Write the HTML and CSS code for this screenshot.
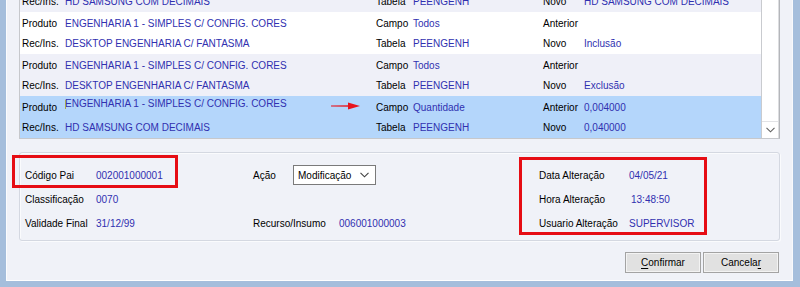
FILE: index.html
```html
<!DOCTYPE html>
<html lang="pt">
<head>
<meta charset="utf-8">
<title>Alteração de Estrutura</title>
<link rel="stylesheet" href="styles.css">
</head>
<body>
<div class="window">
  <div class="list">
    <div class="rows">
      <div class="rows-inner">
        <div class="row row-alt">
          <div class="line">
            <span class="lbl">Produto</span><span class="val">ENGENHARIA 1 - SIMPLES C/ CONFIG. CORES</span>
            <span class="lbl">Campo</span><span class="val">Recurso/Insumo</span>
            <span class="lbl">Anterior</span><span class="val"></span>
          </div>
          <div class="line">
            <span class="lbl">Rec/Ins.</span><span class="val">HD SAMSUNG COM DECIMAIS</span>
            <span class="lbl">Tabela</span><span class="val">PEENGENH</span>
            <span class="lbl">Novo</span><span class="val">HD SAMSUNG COM DECIMAIS</span>
          </div>
        </div>
        <div class="row">
          <div class="line">
            <span class="lbl">Produto</span><span class="val">ENGENHARIA 1 - SIMPLES C/ CONFIG. CORES</span>
            <span class="lbl">Campo</span><span class="val">Todos</span>
            <span class="lbl">Anterior</span><span class="val"></span>
          </div>
          <div class="line">
            <span class="lbl">Rec/Ins.</span><span class="val">DESKTOP ENGENHARIA C/ FANTASMA</span>
            <span class="lbl">Tabela</span><span class="val">PEENGENH</span>
            <span class="lbl">Novo</span><span class="val">Inclusão</span>
          </div>
        </div>
        <div class="row row-alt">
          <div class="line">
            <span class="lbl">Produto</span><span class="val">ENGENHARIA 1 - SIMPLES C/ CONFIG. CORES</span>
            <span class="lbl">Campo</span><span class="val">Todos</span>
            <span class="lbl">Anterior</span><span class="val"></span>
          </div>
          <div class="line">
            <span class="lbl">Rec/Ins.</span><span class="val">DESKTOP ENGENHARIA C/ FANTASMA</span>
            <span class="lbl">Tabela</span><span class="val">PEENGENH</span>
            <span class="lbl">Novo</span><span class="val">Exclusão</span>
          </div>
        </div>
        <div class="row row-sel">
          <div class="line">
            <span class="lbl">Produto</span><span class="val val-edit">ENGENHARIA 1 - SIMPLES C/ CONFIG. CORES</span>
            <span class="lbl">Campo</span><span class="val">Quantidade</span>
            <span class="lbl">Anterior</span><span class="val">0,004000</span>
          </div>
          <div class="line">
            <span class="lbl">Rec/Ins.</span><span class="val">HD SAMSUNG COM DECIMAIS</span>
            <span class="lbl">Tabela</span><span class="val">PEENGENH</span>
            <span class="lbl">Novo</span><span class="val">0,040000</span>
          </div>
        </div>
      </div>
    </div>
    <div class="scrollbar">
      <div class="scroll-btn">
        <svg width="9" height="6" viewBox="0 0 9 6"><path d="M0.5 0.8 L4.5 4.8 L8.5 0.8" fill="none" stroke="#606060" stroke-width="1.1"/></svg>
      </div>
    </div>
  </div>

  <div class="group">
    <div class="field"><span class="flabel w71">Código Pai</span><span class="fval">002001000001</span></div>
    <div class="field"><span class="flabel w40">Ação</span>
      <div class="select"><span>Modificação</span>
        <svg width="9" height="6" viewBox="0 0 9 6"><path d="M0.5 0.8 L4.5 4.8 L8.5 0.8" fill="none" stroke="#404040" stroke-width="1.1"/></svg>
      </div>
    </div>
    <div class="field"><span class="flabel w90">Data Alteração</span><span class="fval">04/05/21</span></div>

    <div class="field"><span class="flabel w71">Classificação</span><span class="fval">0070</span></div>
    <div class="field"></div>
    <div class="field"><span class="flabel w90">Hora Alteração</span><span class="fval shift">13:48:50</span></div>

    <div class="field"><span class="flabel w71">Validade Final</span><span class="fval">31/12/99</span></div>
    <div class="field"><span class="flabel w86">Recurso/Insumo</span><span class="fval">006001000003</span></div>
    <div class="field"><span class="flabel w90">Usuario Alteração</span><span class="fval">SUPERVISOR</span></div>
  </div>

  <div class="buttons">
    <button class="btn"><u>C</u>onfirmar</button>
    <button class="btn">Cancela<u>r</u></button>
  </div>

  <div class="mark mark-a"></div>
  <div class="mark mark-b"></div>
  <svg class="arrow" width="30" height="8" viewBox="0 0 30 8"><path d="M0 3.6 L19 3.2 L19 4.8 L0 4.4 Z" fill="#e8141c"/><path d="M17 0.6 L29 4 L17 7.4 Z" fill="#e8141c"/></svg>
</div>
</body>
</html>
```
FILE: styles.css
```css
* { box-sizing: border-box; }
html, body { margin: 0; padding: 0; }
body {
  background: #a5bedc;
  width: 800px;
  height: 287px;
  overflow: hidden;
  font-family: "Liberation Sans", Arial, sans-serif;
  font-size: 10px;
  color: #000;
}
.window {
  position: relative;
  margin-left: 6px;
  width: 787px;
  height: 281px;
  background: #f0f2f8;
  border-left: 1px solid #fbfcfe;
  border-right: 1px solid #f8f9fc;
  border-bottom: 1px solid #ffffff;
  padding: 0 12px;
  display: flex;
  flex-direction: column;
}
.list {
  height: 139px;
  display: flex;
  border-left: 1px solid #c6c8cc;
  border-right: 1px solid #b4b6ba;
  border-bottom: 1px solid #c6c8cc;
  background: #fff;
}
.rows {
  flex: 1;
  overflow: hidden;
}
.rows-inner {
  margin-top: -30px;
}
.row {
  background: #ffffff;
  height: 42px;
}
.row-alt { background: #eff0f8; }
.row-sel { background: #b4d6fb; }
.line {
  display: grid;
  grid-template-columns: 43px 311px 37px 130px 41px 1fr;
  align-items: center;
  height: 21px;
  padding-left: 2px;
  white-space: nowrap;
}
.row .line:first-child { padding-top: 1px; }
.lbl { color: #000; }
.val { color: #3030b0; }
.val-edit {
  position: relative;
  align-self: start;
  padding-top: 1px;
}
.val-edit::before {
  content: "";
  position: absolute;
  left: 0;
  top: 3px;
  width: 1px;
  height: 9px;
  background: #a9a850;
}
.scrollbar {
  width: 18px;
  border-left: 1px solid #c9cbcf;
  border-right: 1px solid #dcdde0;
  background: #fff;
  display: flex;
  flex-direction: column;
  justify-content: flex-end;
}
.scroll-btn {
  height: 17px;
  border-top: 1px solid #e2e3e6;
  display: flex;
  align-items: center;
  justify-content: center;
}
.group {
  margin-top: 13px;
  height: 89px;
  border: 1px solid #d4d8e1;
  border-radius: 3px;
  box-shadow: inset 1px 1px 0 #fafbfd, 1px 1px 0 #fafbfd;
  padding: 10px 0 0 5px;
  display: grid;
  grid-template-columns: 228px 286px 1fr;
  grid-auto-rows: 24px;
}
.field {
  display: flex;
  align-items: center;
  white-space: nowrap;
}
.flabel { color: #000; flex: none; }
.w40 { width: 40px; }
.w71 { width: 71px; }
.w86 { width: 86px; }
.w90 { width: 90px; }
.fval { color: #3030b0; }
.shift { padding-left: 2px; }
.select {
  width: 83px;
  height: 20px;
  border: 1px solid #7a7a7a;
  background: #fff;
  display: flex;
  align-items: center;
  justify-content: space-between;
  padding: 0 6px 0 4px;
}
.buttons {
  margin-top: 11px;
  display: flex;
  justify-content: flex-end;
  gap: 2px;
  padding-right: 1px;
}
.btn {
  width: 76px;
  height: 21px;
  font-family: "Liberation Sans", Arial, sans-serif;
  font-size: 10px;
  color: #000;
  background: #e1e1e1;
  border: 1px solid #a3a3a3;
  box-shadow: inset 0 0 0 1px #f3f3f3;
  padding: 0;
}
.btn u { text-decoration-thickness: 1px; text-underline-offset: 2px; }
.mark {
  position: absolute;
  border: 3px solid #e60d14;
}
.mark-a { left: 5px; top: 155px; width: 166px; height: 33px; }
.mark-b { left: 512px; top: 157px; width: 188px; height: 78px; }
.arrow { position: absolute; left: 324px; top: 102px; }
```
